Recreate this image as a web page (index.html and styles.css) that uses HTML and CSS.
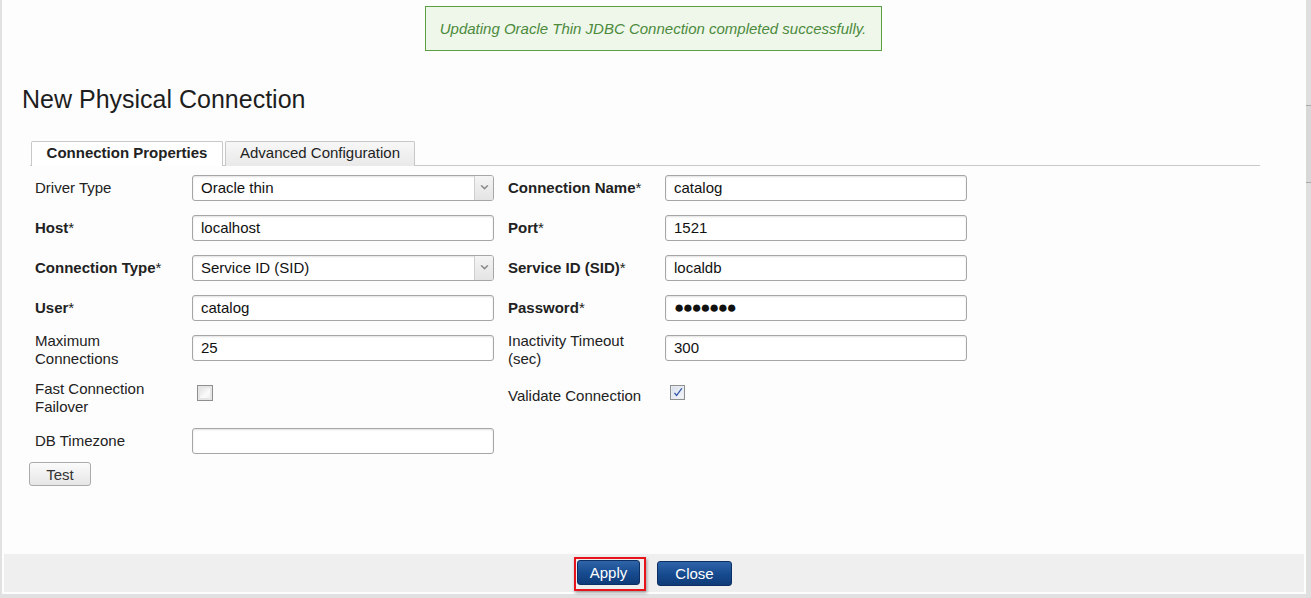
FILE: index.html
```html
<!DOCTYPE html>
<html>
<head>
<meta charset="utf-8">
<title>New Physical Connection</title>
<link rel="stylesheet" href="styles.css">
</head>
<body>
<div class="dialog">
  <div class="content">
    <div class="msg-wrap">
      <div class="msg">Updating Oracle Thin JDBC Connection completed successfully.</div>
    </div>
    <h1 class="title">New Physical Connection</h1>
    <div class="tabs">
      <div class="tab active">Connection Properties</div>
      <div class="tab second">Advanced Configuration</div>
    </div>
    <div class="form">
      <div class="lbl">Driver Type</div>
      <div class="field select"><span class="val">Oracle thin</span><span class="arrow"><svg width="9" height="6" viewBox="0 0 9 6"><path d="M0.5 0.8 L4.5 4.8 L8.5 0.8 L7.2 0 L4.5 2.6 L1.8 0 Z" fill="#8a8a8a"/></svg></span></div>
      <div class="lbl"><b>Connection Name</b>*</div>
      <div class="field"><span class="val">catalog</span></div>

      <div class="lbl"><b>Host</b>*</div>
      <div class="field"><span class="val">localhost</span></div>
      <div class="lbl"><b>Port</b>*</div>
      <div class="field"><span class="val">1521</span></div>

      <div class="lbl"><b>Connection Type</b>*</div>
      <div class="field select"><span class="val">Service ID (SID)</span><span class="arrow"><svg width="9" height="6" viewBox="0 0 9 6"><path d="M0.5 0.8 L4.5 4.8 L8.5 0.8 L7.2 0 L4.5 2.6 L1.8 0 Z" fill="#8a8a8a"/></svg></span></div>
      <div class="lbl"><b>Service ID (SID)</b>*</div>
      <div class="field"><span class="val">localdb</span></div>

      <div class="lbl"><b>User</b>*</div>
      <div class="field"><span class="val">catalog</span></div>
      <div class="lbl"><b>Password</b>*</div>
      <div class="field"><span class="val dots">●●●●●●●</span></div>

      <div class="lbl two">Maximum Connections</div>
      <div class="field"><span class="val">25</span></div>
      <div class="lbl two">Inactivity Timeout (sec)</div>
      <div class="field"><span class="val">300</span></div>

      <div class="lbl two">Fast Connection Failover</div>
      <div class="cbcell"><span class="cb"></span></div>
      <div class="lbl">Validate Connection</div>
      <div class="cbcell"><span class="cb checked"><svg width="12" height="12" viewBox="0 0 12 12"><path d="M2 6.2 L4.6 9.6 L10.4 1.6 L9.4 1 L4.5 7.6 L3 5.5 Z" fill="#2d4fa8"/></svg></span></div>

      <div class="lbl">DB Timezone</div>
      <div class="field"></div>
      <div></div>
      <div></div>
    </div>
    <div class="test-row"><button class="btn-test">Test</button></div>
  </div>
  <div class="footer">
    <span class="highlight"><button class="btn-primary apply">Apply</button></span>
    <button class="btn-primary close">Close</button>
  </div>
</div>
<div class="scrollbar"><div class="thumb"></div></div>
</body>
</html>
```

FILE: styles.css
```css
html, body {
  margin: 0;
  padding: 0;
}
body {
  background: #e1e1e1;
  font-family: "Liberation Sans", Arial, sans-serif;
  font-size: 15px;
  color: #222;
  display: flex;
  width: 1311px;
  height: 598px;
  overflow: hidden;
}
.dialog {
  margin-left: 2px;
  width: 1304px;
  height: 594px;
  background: #fdfdfd;
  display: flex;
  flex-direction: column;
}
.content {
  flex: 1;
  padding: 6px 0 0 20px;
}
.msg-wrap {
  display: flex;
  justify-content: center;
  padding-right: 22px;
}
.msg {
  box-sizing: border-box;
  width: 457px;
  height: 45px;
  border: 1px solid #58a041;
  background: #eef7ea;
  color: #4c8a3c;
  font-style: italic;
  font-size: 15px;
  display: flex;
  align-items: center;
  justify-content: center;
}
.title {
  margin: 34px 0 0 0;
  font-size: 25px;
  line-height: 28px;
  font-weight: normal;
  color: #1e1e1e;
}
.tabs {
  margin: 28px 0 0 8px;
  width: 1229px;
  display: flex;
  gap: 2px;
  border-bottom: 1px solid #c9c9c9;
  height: 24px;
  padding-left: 1px;
}
.tab {
  box-sizing: border-box;
  height: 25px;
  padding: 0 12px;
  line-height: 22px;
  white-space: nowrap;
  border: 1px solid #c8c8c8;
  border-bottom: none;
  background: linear-gradient(#f7f7f7, #e9e9e9);
  color: #222;
  border-radius: 2px 2px 0 0;
  text-align: center;
}
.tab.second {
  width: 190px;
}
.tab.active {
  background: #fff;
  font-weight: bold;
  width: 192px;
  height: 25px;
  margin-bottom: -1px;
}
.form {
  margin: 2px 0 0 13px;
  display: grid;
  grid-template-columns: 143px 302px 143px 302px;
  column-gap: 14px;
  grid-template-rows: 40px 40px 40px 40px 40px 56px 34px;
  align-items: center;
}
.lbl {
  max-width: 140px;
  line-height: 18px;
  color: #222;
}
.lbl.two {
  margin-top: 4px;
}
.lbl b {
  font-weight: bold;
}
.field {
  box-sizing: border-box;
  height: 26px;
  border: 1px solid #a6a6a6;
  border-radius: 3px;
  background: #fff;
  box-shadow: inset 0 1px 2px rgba(0,0,0,0.12);
  display: flex;
  align-items: center;
  padding-left: 8px;
  color: #111;
}
.val {
  flex: 1;
  line-height: 24px;
}
.dots {
  font-size: 17px;
  letter-spacing: -1.5px;
  color: #111;
}
.select .arrow {
  width: 18px;
  height: 24px;
  border-left: 1px solid #cfcfcf;
  background: linear-gradient(#f4f4f4, #e4e4e4);
  display: flex;
  align-items: center;
  justify-content: center;
  border-radius: 0 2px 2px 0;
}
.cbcell {
  align-self: center;
  margin-bottom: 6px;
  height: 16px;
}
.cb {
  display: flex;
  align-items: center;
  justify-content: center;
  box-sizing: border-box;
  width: 16px;
  height: 16px;
  margin-left: 5px;
  border: 1px solid #8f8f8f;
  background: linear-gradient(135deg, #dcdcdc, #fbfbfb 60%, #ececec);
  box-shadow: inset 0 0 0 2px #e6e6e6;
}
.cb.checked {
  width: 15px;
  height: 15px;
  background: linear-gradient(135deg, #d7deea, #f5f7fb);
  box-shadow: inset 0 0 0 1px #e8ecf3;
}
.test-row {
  margin: 4px 0 0 7px;
}
.btn-test {
  box-sizing: border-box;
  width: 62px;
  height: 24px;
  border: 1px solid #ababab;
  border-radius: 3px;
  background: linear-gradient(#fbfbfb, #e6e6e6);
  font-family: "Liberation Sans", Arial, sans-serif;
  font-size: 15px;
  color: #333;
  padding: 0;
}
.footer {
  margin: 0 2px 2px 2px;
  height: 38px;
  background: #efefef;
  display: flex;
  justify-content: center;
  align-items: flex-start;
  gap: 11px;
  padding-right: 2px;
}
.highlight {
  box-sizing: border-box;
  margin-top: 3px;
  width: 72px;
  height: 34px;
  border: 2px solid #e8141c;
  padding: 1px 4px 3px 1px;
  box-shadow: 1px 2px 3px rgba(0,0,0,0.35);
  display: flex;
}
.btn-primary {
  box-sizing: border-box;
  height: 25px;
  border: 1px solid #0d2f63;
  border-radius: 3px;
  background: linear-gradient(#2f64a9, #164a8e 55%, #0f3b78);
  color: #fff;
  font-family: "Liberation Sans", Arial, sans-serif;
  font-size: 15px;
  padding: 0;
}
.apply {
  width: 63px;
}
.close {
  width: 75px;
  margin-top: 7px;
}
.scrollbar {
  flex: 1;
  background: #dfdfdf;
}
.thumb {
  margin-top: 105px;
  height: 76px;
  border-top: 1px solid #a9a9a9;
  border-bottom: 1px solid #a9a9a9;
  background: #d8d8d8;
}
```
